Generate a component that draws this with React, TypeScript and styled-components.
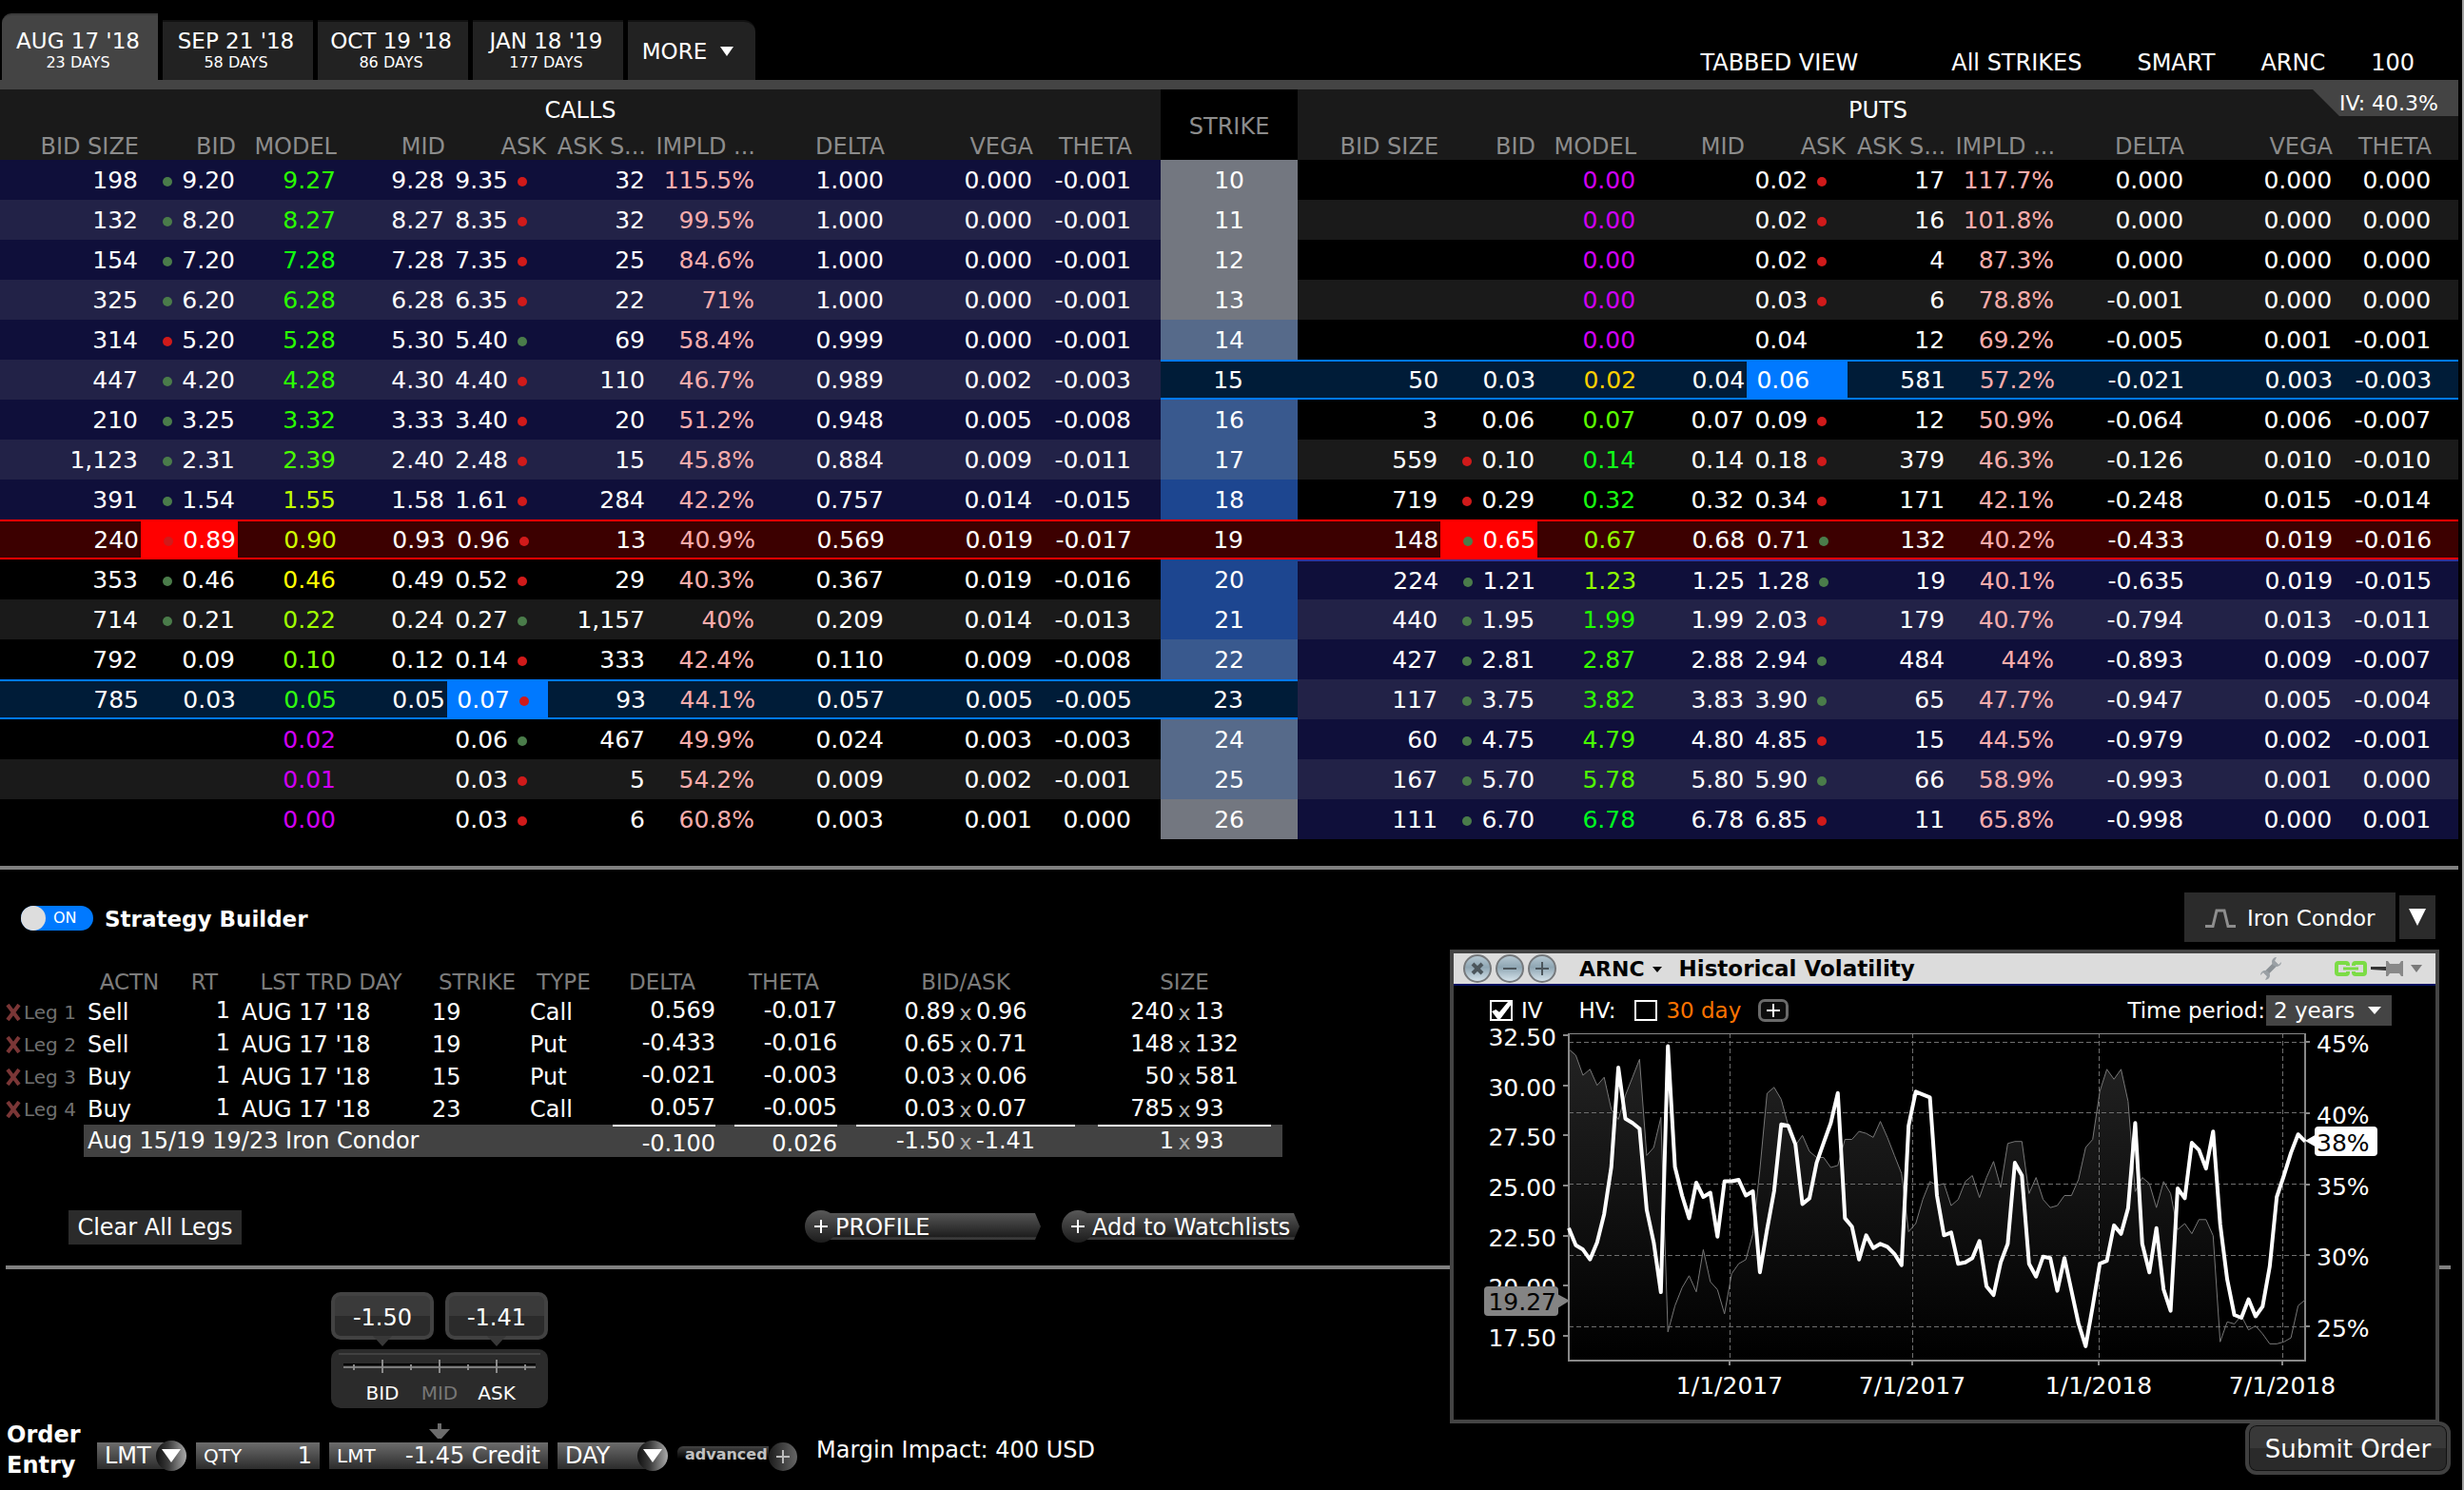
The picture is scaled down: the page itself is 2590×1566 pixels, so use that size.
import React from "react";
import styled, { createGlobalStyle, css } from "styled-components";

const GlobalStyle = createGlobalStyle`
  *, *::before, *::after { box-sizing: border-box; }
  body {
    margin: 0;
    background: #000;
    color: #fff;
    font-family: "DejaVu Sans", Verdana, sans-serif;
    font-size: 24px;
    line-height: 28px;
  }
  button, input, select {
    margin: 0;
    padding: 0;
    border: 0;
    border-radius: 0;
    background: none;
    color: inherit;
    font: inherit;
  }
`;

const Page = styled.main`
  min-height: 100vh;
  padding-right: 4px;
  border-right: 2px solid #a0a0a0;
  display: flex;
  flex-direction: column;
`;

/* ---------- top bar ---------- */

const TopBar = styled.header`
  height: 84px;
  display: flex;
  align-items: flex-end;
  justify-content: space-between;
`;

const Tabs = styled.nav`
  display: flex;
  align-items: flex-end;
  gap: 5px;
  padding-left: 2px;
`;

const Tab = styled.button<{ $active?: boolean }>`
  width: ${(p) => (p.$active ? 164 : 158)}px;
  height: ${(p) => (p.$active ? 70 : 63)}px;
  padding: 0 4px 8px 0;
  display: flex;
  flex-direction: column;
  justify-content: flex-end;
  align-items: center;
  border-radius: ${(p) => (p.$active ? "10px 0 0 0" : "0")};
  border-top: 2px solid ${(p) => (p.$active ? "#3a3a3a" : "#111")};
  background: ${(p) => (p.$active ? "#444" : "#222")};
  font-size: 23px;
  line-height: 26px;
  white-space: nowrap;
`;

const TabDays = styled.span`
  font-size: 16px;
  line-height: 20px;
`;

const MoreTab = styled.button`
  width: 134px;
  height: 63px;
  padding-right: 8px;
  display: flex;
  align-items: center;
  justify-content: center;
  gap: 14px;
  border-radius: 0 12px 0 0;
  border-top: 2px solid #111;
  background: #222;
  font-size: 23px;
`;

const Filters = styled.nav`
  display: flex;
  gap: 48px;
  padding: 0 46px 4px 0;
`;

const Filter = styled.button<{ $gap?: number }>`
  margin-right: ${(p) => p.$gap ?? 0}px;
  white-space: nowrap;
`;

/* ---------- option chain ---------- */

const ChainPanel = styled.section`
  position: relative;
  border-top: 10px solid #444;
`;

const IvBadge = styled.div`
  position: absolute;
  top: 0;
  right: 0;
  width: 153px;
  height: 28px;
  padding-right: 21px;
  background: #444;
  clip-path: polygon(0 0, 100% 0, 100% 100%, 28px 100%);
  font-size: 22px;
  line-height: 30px;
  text-align: right;
`;

const Chain = styled.table`
  width: 100%;
  table-layout: fixed;
  border-collapse: separate;
  border-spacing: 0;
  font-size: 25px;
  line-height: 34px;
`;

const SideHead = styled.th`
  height: 40px;
  padding: 4px 0 0;
  background: #1a1a1a;
  font-size: 24px;
  font-weight: 400;
`;

const ColHead = styled.th`
  height: 34px;
  padding: 5px 2px 0 0;
  background: #1a1a1a;
  color: #8c8c8c;
  font-size: 24px;
  line-height: 28px;
  font-weight: 400;
  text-align: right;
  white-space: nowrap;
`;

const StrikeHead = styled.th`
  padding: 3px 0 0;
  background: #000;
  color: #8c8c8c;
  font-size: 24px;
  font-weight: 400;
`;

type Mark = "buy" | "sell" | "edge" | undefined;

const marks = {
  buy: css`
    background: #001c38;
    border-top: 2px solid #0079ff;
    border-bottom: 2px solid #0079ff;
    padding-right: 2px;
  `,
  sell: css`
    background: #3c0000;
    border-top: 2px solid #f00;
    border-bottom: 2px solid #f00;
    padding-right: 2px;
  `,
  edge: css`
    border-top: 2px solid #333399;
    padding-right: 2px;
  `,
};

const Cell = styled.td<{ $bg: string; $mark: Mark; $fill?: string; $flush?: boolean }>`
  height: 42px;
  padding: 2px 3px 0 0;
  background: ${(p) => p.$bg};
  text-align: right;
  white-space: nowrap;
  ${(p) => p.$mark && marks[p.$mark]}
  ${(p) => p.$fill && `background: ${p.$fill};`}
  ${(p) => p.$flush && "padding-right: 0;"}
`;

const StrikeCell = styled.th<{ $bg: string; $mark: Mark }>`
  height: 42px;
  padding: 2px 0 0;
  background: ${(p) => p.$bg};
  font-weight: 400;
  ${(p) => p.$mark && marks[p.$mark]}
`;

const Tinted = styled.span<{ $color: string }>`
  color: ${(p) => p.$color};
`;

const Quote = styled.div`
  display: flex;
  align-items: center;
  justify-content: flex-end;
`;

const Dot = styled.i<{ $up: boolean }>`
  width: 10px;
  height: 10px;
  margin: 2px 10px 0;
  border-radius: 50%;
  background: ${(p) => (p.$up ? "#4a7c4a" : "#d01a1a")};
`;

const DotSlot = styled.span<{ $tight: boolean }>`
  width: ${(p) => (p.$tight ? 40 : 42)}px;
  display: flex;
`;

/* bidSize, bidDot, bid, model, modelColor, mid, ask, askDot, askSize, implied, delta, vega, theta */
type Side = [string, string, string, string, string, string, string, string, string, string, string, string, string];
interface Row {
  strike: number;
  shade: string;
  call: Side;
  put: Side;
}

const V = "#d000f5";
const rows: Row[] = [
  { strike: 10, shade: "#737780", call: ["198", "g", "9.20", "9.27", "#2aff00", "9.28", "9.35", "r", "32", "115.5%", "1.000", "0.000", "-0.001"], put: ["", "", "", "0.00", V, "", "0.02", "r", "17", "117.7%", "0.000", "0.000", "0.000"] },
  { strike: 11, shade: "#737780", call: ["132", "g", "8.20", "8.27", "#2aff00", "8.27", "8.35", "r", "32", "99.5%", "1.000", "0.000", "-0.001"], put: ["", "", "", "0.00", V, "", "0.02", "r", "16", "101.8%", "0.000", "0.000", "0.000"] },
  { strike: 12, shade: "#737780", call: ["154", "g", "7.20", "7.28", "#10ff10", "7.28", "7.35", "r", "25", "84.6%", "1.000", "0.000", "-0.001"], put: ["", "", "", "0.00", V, "", "0.02", "r", "4", "87.3%", "0.000", "0.000", "0.000"] },
  { strike: 13, shade: "#737780", call: ["325", "g", "6.20", "6.28", "#2aff00", "6.28", "6.35", "r", "22", "71%", "1.000", "0.000", "-0.001"], put: ["", "", "", "0.00", V, "", "0.03", "r", "6", "78.8%", "-0.001", "0.000", "0.000"] },
  { strike: 14, shade: "#566a8a", call: ["314", "r", "5.20", "5.28", "#2aff00", "5.30", "5.40", "g", "69", "58.4%", "0.999", "0.000", "-0.001"], put: ["", "", "", "0.00", V, "", "0.04", "", "12", "69.2%", "-0.005", "0.001", "-0.001"] },
  { strike: 15, shade: "#001c38", call: ["447", "g", "4.20", "4.28", "#2aff00", "4.30", "4.40", "r", "110", "46.7%", "0.989", "0.002", "-0.003"], put: ["50", "", "0.03", "0.02", "#ffd000", "0.04", "0.06", "", "581", "57.2%", "-0.021", "0.003", "-0.003"] },
  { strike: 16, shade: "#39598e", call: ["210", "g", "3.25", "3.32", "#2aff00", "3.33", "3.40", "r", "20", "51.2%", "0.948", "0.005", "-0.008"], put: ["3", "", "0.06", "0.07", "#5aff00", "0.07", "0.09", "r", "12", "50.9%", "-0.064", "0.006", "-0.007"] },
  { strike: 17, shade: "#39598e", call: ["1,123", "g", "2.31", "2.39", "#4aff00", "2.40", "2.48", "r", "15", "45.8%", "0.884", "0.009", "-0.011"], put: ["559", "r", "0.10", "0.14", "#10ff18", "0.14", "0.18", "r", "379", "46.3%", "-0.126", "0.010", "-0.010"] },
  { strike: 18, shade: "#1d4690", call: ["391", "g", "1.54", "1.55", "#c0ff00", "1.58", "1.61", "r", "284", "42.2%", "0.757", "0.014", "-0.015"], put: ["719", "r", "0.29", "0.32", "#18ff10", "0.32", "0.34", "r", "171", "42.1%", "-0.248", "0.015", "-0.014"] },
  { strike: 19, shade: "#3c0000", call: ["240", "r", "0.89", "0.90", "#d0ff00", "0.93", "0.96", "r", "13", "40.9%", "0.569", "0.019", "-0.017"], put: ["148", "g", "0.65", "0.67", "#90ff00", "0.68", "0.71", "g", "132", "40.2%", "-0.433", "0.019", "-0.016"] },
  { strike: 20, shade: "#1d4690", call: ["353", "g", "0.46", "0.46", "#ffff00", "0.49", "0.52", "r", "29", "40.3%", "0.367", "0.019", "-0.016"], put: ["224", "g", "1.21", "1.23", "#90ff00", "1.25", "1.28", "g", "19", "40.1%", "-0.635", "0.019", "-0.015"] },
  { strike: 21, shade: "#1d4690", call: ["714", "g", "0.21", "0.22", "#a0ff00", "0.24", "0.27", "g", "1,157", "40%", "0.209", "0.014", "-0.013"], put: ["440", "g", "1.95", "1.99", "#20ff00", "1.99", "2.03", "r", "179", "40.7%", "-0.794", "0.013", "-0.011"] },
  { strike: 22, shade: "#39598e", call: ["792", "", "0.09", "0.10", "#80ff00", "0.12", "0.14", "r", "333", "42.4%", "0.110", "0.009", "-0.008"], put: ["427", "g", "2.81", "2.87", "#38ff00", "2.88", "2.94", "g", "484", "44%", "-0.893", "0.009", "-0.007"] },
  { strike: 23, shade: "#001c38", call: ["785", "", "0.03", "0.05", "#30ff10", "0.05", "0.07", "r", "93", "44.1%", "0.057", "0.005", "-0.005"], put: ["117", "g", "3.75", "3.82", "#30ff00", "3.83", "3.90", "g", "65", "47.7%", "-0.947", "0.005", "-0.004"] },
  { strike: 24, shade: "#566a8a", call: ["", "", "", "0.02", V, "", "0.06", "g", "467", "49.9%", "0.024", "0.003", "-0.003"], put: ["60", "g", "4.75", "4.79", "#48ff00", "4.80", "4.85", "r", "15", "44.5%", "-0.979", "0.002", "-0.001"] },
  { strike: 25, shade: "#566a8a", call: ["", "", "", "0.01", V, "", "0.03", "r", "5", "54.2%", "0.009", "0.002", "-0.001"], put: ["167", "g", "5.70", "5.78", "#50ff00", "5.80", "5.90", "g", "66", "58.9%", "-0.993", "0.001", "0.000"] },
  { strike: 26, shade: "#737780", call: ["", "", "", "0.00", V, "", "0.03", "r", "6", "60.8%", "0.003", "0.001", "0.000"], put: ["111", "g", "6.70", "6.78", "#00ff20", "6.78", "6.85", "r", "11", "65.8%", "-0.998", "0.000", "0.001"] },
];

const sideColumns = ["BID SIZE", "BID", "MODEL", "MID", "ASK", "ASK S...", "IMPLD ...", "DELTA", "VEGA", "THETA", ""];
const callWidths = [148, 102, 106, 114, 106, 105, 115, 136, 156, 104, 28];
const putWidths = [150, 102, 106, 114, 106, 105, 115, 136, 156, 104, 26];

function SideCells({ data, bg, mark }: { data: Side; bg: string; mark: Mark }) {
  const [bidSize, bidDot, bid, model, modelColor, mid, ask, askDot, askSize, implied, delta, vega, theta] = data;
  const common = { $bg: bg, $mark: mark };
  return (
    <>
      <Cell {...common}>{bidSize}</Cell>
      <Cell {...common} $fill={mark === "sell" ? "#f00" : undefined}>
        <Quote>
          {bidDot && <Dot $up={bidDot === "g"} />}
          {bid}
        </Quote>
      </Cell>
      <Cell {...common}>
        <Tinted $color={modelColor}>{model}</Tinted>
      </Cell>
      <Cell {...common}>{mid}</Cell>
      <Cell {...common} $fill={mark === "buy" ? "#0079ff" : undefined} $flush>
        <Quote>
          {ask}
          <DotSlot $tight={Boolean(mark)}>{askDot && <Dot $up={askDot === "g"} />}</DotSlot>
        </Quote>
      </Cell>
      <Cell {...common}>{askSize}</Cell>
      <Cell {...common}>
        <Tinted $color="#f8acac">{implied}</Tinted>
      </Cell>
      <Cell {...common}>{delta}</Cell>
      <Cell {...common}>{vega}</Cell>
      <Cell {...common}>{theta}</Cell>
      <Cell {...common} />
    </>
  );
}

function OptionChain() {
  return (
    <ChainPanel>
      <Chain>
        <colgroup>
          {callWidths.map((w, i) => <col key={i} width={w} />)}
          <col width={144} />
          {putWidths.map((w, i) => <col key={i} width={w} />)}
        </colgroup>
        <thead>
          <tr>
            <SideHead colSpan={11}>CALLS</SideHead>
            <StrikeHead rowSpan={2}>STRIKE</StrikeHead>
            <SideHead colSpan={11}>PUTS</SideHead>
          </tr>
          <tr>
            {sideColumns.map((c, i) => <ColHead key={`c${i}`}>{c}</ColHead>)}
            {sideColumns.map((c, i) => <ColHead key={`p${i}`}>{c}</ColHead>)}
          </tr>
        </thead>
        <tbody>
          {rows.map(({ strike, shade, call, put }) => {
            const odd = strike % 2 === 1;
            const inMoney = odd ? "#222247" : "#0f0f3a";
            const outMoney = odd ? "#1a1a1a" : "#000";
            const callMark: Mark = strike === 19 ? "sell" : strike === 23 ? "buy" : undefined;
            const putMark: Mark = strike === 19 ? "sell" : strike === 15 ? "buy" : strike === 20 ? "edge" : undefined;
            const strikeMark: Mark = strike === 19 ? "sell" : strike === 15 || strike === 23 ? "buy" : undefined;
            return (
              <tr key={strike}>
                <SideCells data={call} bg={strike < 19 ? inMoney : outMoney} mark={callMark} />
                <StrikeCell scope="row" $bg={shade} $mark={strikeMark}>{strike}</StrikeCell>
                <SideCells data={put} bg={strike > 19 ? inMoney : outMoney} mark={putMark} />
              </tr>
            );
          })}
        </tbody>
      </Chain>
      <IvBadge>IV: 40.3%</IvBadge>
    </ChainPanel>
  );
}

/* ---------- strategy builder ---------- */

const Lower = styled.div`
  position: relative;
  flex: 1;
  display: flex;
  flex-direction: column;
  margin-top: 28px;
  border-top: 4px solid #808080;
`;

const Builder = styled.section`
  height: 416px;
  padding-top: 24px;
`;

const BuilderHead = styled.div`
  height: 52px;
  padding: 0 24px 0 22px;
  display: flex;
  align-items: center;
`;

const Switch = styled.label`
  width: 76px;
  height: 26px;
  margin-top: 2px;
  display: flex;
  align-items: center;
  gap: 8px;
  border-radius: 13px;
  background: #0079ff;
  font-size: 16px;
  line-height: 28px;
`;

const Knob = styled.input`
  appearance: none;
  width: 26px;
  height: 26px;
  border-radius: 50%;
  background: #ddd;
`;

const BuilderTitle = styled.h2`
  margin: 0 auto 0 12px;
  padding-top: 3px;
  font-size: 23px;
  font-weight: 700;
`;

const StrategyButton = styled.button`
  width: 222px;
  height: 52px;
  padding: 2px 0 0 22px;
  display: flex;
  align-items: center;
  gap: 12px;
  background: #2b2b2b;
  font-size: 23px;
  white-space: nowrap;
`;

const ArrowButton = styled.button`
  width: 38px;
  height: 46px;
  margin-left: 4px;
  display: grid;
  place-items: center;
  background: #2b2b2b;
`;

const Legs = styled.table`
  margin-top: 22px;
  table-layout: fixed;
  width: 1348px;
  border-collapse: separate;
  border-spacing: 0;
  line-height: 28px;
`;

const LegHead = styled.th`
  height: 34px;
  padding: 6px 0 0;
  color: #7c7c7c;
  font-size: 23px;
  font-weight: 400;
  white-space: nowrap;
`;

const LegCell = styled.td<{ $pad?: number }>`
  height: 34px;
  padding: 2px 0 0 ${(p) => p.$pad ?? 4}px;
  white-space: nowrap;
`;

const LegNumber = styled.td<{ $pad?: number }>`
  height: 34px;
  padding: 0 ${(p) => p.$pad ?? 8}px 2px 0;
  text-align: right;
`;

const LegName = styled.div`
  display: flex;
  align-items: center;
  padding-left: 5px;
  gap: 2px;
  color: #707070;
  font-size: 20px;
  line-height: 28px;
`;

const RemoveButton = styled.button`
  width: 18px;
  height: 18px;
  display: grid;
  place-items: center;
`;

const Pair = styled.div`
  display: grid;
  grid-template-columns: 1fr 22px 1fr;
  text-align: left;
  & > :first-child { text-align: right; }
`;

const Times = styled.span`
  padding-top: 2px;
  color: #b0b0b0;
  font-size: 22px;
  text-align: center;
`;

const TotalCell = styled.td`
  height: 34px;
  padding: 0;
  background: #424242;
  white-space: nowrap;
`;

const TotalName = styled.div`
  padding-left: 4px;
`;

const TotalLine = styled.div<{ $end: number }>`
  height: 34px;
  margin: 0 ${(p) => p.$end}px 0 12px;
  padding-top: 4px;
  border-top: 2px solid #fff;
  text-align: right;
`;

const PairLine = styled(TotalLine)`
  padding-top: 1px;
`;

const BuilderActions = styled.div`
  width: 1366px;
  margin-top: 56px;
  padding-left: 72px;
  display: flex;
  align-items: flex-start;
`;

const ClearButton = styled.button`
  width: 182px;
  height: 36px;
  margin-right: auto;
  background: #2b2b2b;
  white-space: nowrap;
`;

const PlusButton = styled.button<{ $width: number }>`
  width: ${(p) => p.$width}px;
  height: 34px;
  margin-left: 22px;
  display: flex;
  align-items: center;
  white-space: nowrap;
`;

const PlusDisc = styled.span`
  width: 34px;
  height: 34px;
  margin-right: -14px;
  z-index: 1;
  display: grid;
  place-items: center;
  border-radius: 50%;
  background: linear-gradient(#585858, #1c1c1c);
`;

const PlusBar = styled.span`
  flex: 1;
  height: 28px;
  padding: 1px 0 0 12px;
  background: linear-gradient(#555, #1e1e1e 88%, #3a3a3a 92%);
  clip-path: polygon(0 0, calc(100% - 6px) 0, 100% 50%, calc(100% - 6px) 100%, 0 100%);
  text-align: left;
`;

interface Leg {
  action: string;
  strike: string;
  type: string;
  delta: string;
  theta: string;
  quote: [string, string];
  size: [string, string];
}

const legs: Leg[] = [
  { action: "Sell", strike: "19", type: "Call", delta: "0.569", theta: "-0.017", quote: ["0.89", "0.96"], size: ["240", "13"] },
  { action: "Sell", strike: "19", type: "Put", delta: "-0.433", theta: "-0.016", quote: ["0.65", "0.71"], size: ["148", "132"] },
  { action: "Buy", strike: "15", type: "Put", delta: "-0.021", theta: "-0.003", quote: ["0.03", "0.06"], size: ["50", "581"] },
  { action: "Buy", strike: "23", type: "Call", delta: "0.057", theta: "-0.005", quote: ["0.03", "0.07"], size: ["785", "93"] },
];

const legColumns: [string, number][] = [
  ["", 88], ["ACTN", 96], ["RT", 62], ["LST TRD DAY", 204], ["STRIKE", 103],
  ["TYPE", 79], ["DELTA", 128], ["THETA", 128], ["BID/ASK", 254], ["SIZE", 206],
];

const By = ({ pair }: { pair: [string, string] }) => (
  <Pair>
    <span>{pair[0]}</span>
    <Times>x</Times>
    <span>{pair[1]}</span>
  </Pair>
);

const Caret = ({ w, h, color = "#fff" }: { w: number; h: number; color?: string }) => (
  <svg width={w} height={h} viewBox="0 0 10 10" preserveAspectRatio="none" aria-hidden="true">
    <path d="M0 0H10L5 10Z" fill={color} />
  </svg>
);

const Plus = ({ size, color = "#fff", weight = 2 }: { size: number; color?: string; weight?: number }) => (
  <svg width={size} height={size} viewBox={`0 0 ${size} ${size}`} aria-hidden="true">
    <path d={`M${size / 2} 0V${size}M0 ${size / 2}H${size}`} stroke={color} strokeWidth={weight} />
  </svg>
);

function StrategyBuilder() {
  return (
    <Builder>
      <BuilderHead>
        <Switch>
          <Knob type="checkbox" defaultChecked />
          ON
        </Switch>
        <BuilderTitle>Strategy Builder</BuilderTitle>
        <StrategyButton>
          <svg width="32" height="20" viewBox="0 0 32 20" fill="none" stroke="#8e8e8e" strokeWidth="3" aria-hidden="true">
            <path d="M0 18.500H8L12 2H20L24 18.500H32" />
          </svg>
          Iron Condor
        </StrategyButton>
        <ArrowButton aria-label="Choose strategy">
          <Caret w={18} h={18} />
        </ArrowButton>
      </BuilderHead>

      <Legs>
        <colgroup>
          {legColumns.map(([, w], i) => <col key={i} width={w} />)}
        </colgroup>
        <thead>
          <tr>
            {legColumns.map(([name], i) => <LegHead key={i}>{name}</LegHead>)}
          </tr>
        </thead>
        <tbody>
          {legs.map((leg, i) => (
            <tr key={i}>
              <LegCell $pad={0}>
                <LegName>
                  <RemoveButton aria-label={`Remove leg ${i + 1}`}>
                    <svg width="18" height="18" viewBox="0 0 18 18" aria-hidden="true">
                      <path d="M3 1L15 17M15 1L3 17" stroke="#7a3636" strokeWidth="4" />
                    </svg>
                  </RemoveButton>
                  Leg {i + 1}
                </LegName>
              </LegCell>
              <LegCell>{leg.action}</LegCell>
              <LegNumber $pad={4}>1</LegNumber>
              <LegCell $pad={8}>AUG 17 '18</LegCell>
              <LegCell>{leg.strike}</LegCell>
              <LegCell>{leg.type}</LegCell>
              <LegNumber>{leg.delta}</LegNumber>
              <LegNumber>{leg.theta}</LegNumber>
              <LegCell $pad={0}><By pair={leg.quote} /></LegCell>
              <LegCell $pad={0}><By pair={leg.size} /></LegCell>
            </tr>
          ))}
          <tr>
            <td />
            <TotalCell colSpan={5}>
              <TotalName>Aug 15/19 19/23 Iron Condor</TotalName>
            </TotalCell>
            <TotalCell><TotalLine $end={8}>-0.100</TotalLine></TotalCell>
            <TotalCell><TotalLine $end={8}>0.026</TotalLine></TotalCell>
            <TotalCell><PairLine $end={12}><By pair={["-1.50", "-1.41"]} /></PairLine></TotalCell>
            <TotalCell><PairLine $end={12}><By pair={["1", "93"]} /></PairLine></TotalCell>
          </tr>
        </tbody>
      </Legs>

      <BuilderActions>
        <ClearButton>Clear All Legs</ClearButton>
        <PlusButton $width={248}>
          <PlusDisc><Plus size={14} /></PlusDisc>
          <PlusBar>PROFILE</PlusBar>
        </PlusButton>
        <PlusButton $width={250}>
          <PlusDisc><Plus size={14} /></PlusDisc>
          <PlusBar>Add to Watchlists</PlusBar>
        </PlusButton>
      </BuilderActions>
    </Builder>
  );
}

/* ---------- order entry ---------- */

const Divider = styled.hr`
  width: auto;
  height: 4px;
  margin: 0 8px 0 6px;
  border: 0;
  background: #808080;
`;

const Order = styled.section`
  flex: 1;
  min-height: 232px;
  padding: 0 8px 0 7px;
  display: flex;
  align-items: flex-end;
`;

const OrderTitle = styled.h2`
  width: 95px;
  margin: 0 0 10px;
  font-size: 24px;
  line-height: 32px;
  font-weight: 700;
`;

const Picker = styled.label<{ $width: number }>`
  position: relative;
  width: ${(p) => p.$width}px;
  height: 32px;
  margin: 0 10px 20px 0;
  padding-right: 16px;
  display: flex;
  align-items: center;
`;

const PickerSelect = styled.select`
  appearance: none;
  width: 100%;
  height: 28px;
  padding-left: 8px;
  background: linear-gradient(#6c6c6c, #2c2c2c);
  line-height: 28px;
`;

const PickerDisc = styled.span`
  position: absolute;
  right: 0;
  top: 0;
  width: 32px;
  height: 32px;
  display: grid;
  place-items: center;
  border-radius: 50%;
  background: linear-gradient(90deg, #111, #3a3a3a 40%, #aaa);
  pointer-events: none;
`;

const Field = styled.label<{ $width: number }>`
  width: ${(p) => p.$width}px;
  height: 28px;
  margin: 0 10px 22px 0;
  padding: 0 8px;
  display: flex;
  align-items: center;
  background: linear-gradient(#6c6c6c, #2c2c2c);
  font-size: 20px;
`;

const FieldInput = styled.input`
  flex: 1;
  min-width: 0;
  font-size: 24px;
  text-align: right;
`;

const PriceColumn = styled.div`
  width: 240px;
`;

const Bubbles = styled.div`
  display: flex;
  gap: 12px;
  margin: 0 10px 10px 2px;
`;

const Bubble = styled.button`
  position: relative;
  flex: 1;
  height: 50px;
  padding-top: 4px;
  border: 4px solid #424242;
  border-radius: 10px;
  background: linear-gradient(#3a3a3a 50%, #2b2b2b 50%);

  &::after {
    content: "";
    position: absolute;
    left: 50%;
    top: 100%;
    width: 20px;
    height: 11px;
    margin-left: -10px;
    background: #383838;
    clip-path: polygon(0 0, 100% 0, 50% 100%);
  }
`;

const Scale = styled.div`
  height: 62px;
  margin: 0 10px 0 2px;
  padding: 4px 8px 0;
  border-radius: 10px;
  background: #2b2b2b;
`;

const ScaleTicks = styled.svg`
  display: block;
`;

const ScaleLabels = styled.div`
  display: grid;
  grid-template-columns: repeat(3, 60px);
  justify-content: center;
  margin-top: 6px;
  font-size: 20px;
  line-height: 24px;
  text-align: center;
`;

const ArrowRow = styled.div`
  height: 36px;
  padding: 16px 8px 0 0;
  display: flex;
  justify-content: center;
`;

const Advanced = styled.button`
  width: 126px;
  height: 30px;
  margin: 0 20px 20px 0;
  display: flex;
  align-items: center;
  color: #c0c0c0;
  font-size: 16px;
  font-weight: 700;
`;

const AdvancedBar = styled.span`
  width: 96px;
  height: 22px;
  padding-left: 8px;
  border-radius: 6px 0 0 0;
  background: linear-gradient(#444, #000 60%);
  line-height: 18px;
  text-align: left;
`;

const AdvancedDisc = styled.span`
  width: 30px;
  height: 30px;
  display: grid;
  place-items: center;
  border-radius: 50%;
  background: linear-gradient(90deg, #1c1c1c, #666);
`;

const Margin = styled.p`
  margin: 0 auto 27px 0;
  line-height: 30px;
`;

const Submit = styled.button`
  width: 216px;
  height: 56px;
  margin-bottom: 16px;
  padding-top: 2px;
  border: 4px solid #404040;
  border-radius: 12px;
  background: linear-gradient(#383838 50%, #2a2a2a 50%);
  box-shadow: inset 0 0 0 1px #111;
  font-size: 26px;
  white-space: nowrap;
`;

const Muted = styled.span`
  color: #777;
`;

function OrderEntry() {
  return (
    <Order>
      <OrderTitle>Order Entry</OrderTitle>
      <Picker $width={94}>
        <PickerSelect aria-label="Order type"><option>LMT</option></PickerSelect>
        <PickerDisc><Caret w={20} h={14} /></PickerDisc>
      </Picker>
      <Field $width={130}>
        QTY
        <FieldInput defaultValue="1" />
      </Field>
      <PriceColumn>
        <Bubbles>
          <Bubble>-1.50</Bubble>
          <Bubble>-1.41</Bubble>
        </Bubbles>
        <Scale>
          <ScaleTicks width="212" height="24" viewBox="0 0 212 24" aria-hidden="true">
            <path d="M0 1H212" stroke="#414141" strokeWidth="2" />
            <path d="M5 12H207" stroke="#000" strokeWidth="2" />
            <path d="M5 15H207" stroke="#7c7c7c" strokeWidth="2" />
            <path d="M46 7V21M106 7V21M166 7V21" stroke="#8a8a8a" strokeWidth="2" />
            <path d="M16 12V18M76 12V18M136 12V18M196 12V18" stroke="#8a8a8a" strokeWidth="2" />
          </ScaleTicks>
          <ScaleLabels>
            <span>BID</span>
            <Muted>MID</Muted>
            <span>ASK</span>
          </ScaleLabels>
        </Scale>
        <ArrowRow>
          <svg width="22" height="16" viewBox="0 0 22 16" aria-hidden="true">
            <path d="M11 0V8" stroke="#6c6c6c" strokeWidth="4" />
            <path d="M0 6H22L13 16H9Z" fill="#6c6c6c" />
          </svg>
        </ArrowRow>
        <Field $width={230}>
          LMT
          <FieldInput defaultValue="-1.45 Credit" />
        </Field>
      </PriceColumn>
      <Picker $width={116}>
        <PickerSelect aria-label="Time in force"><option>DAY</option></PickerSelect>
        <PickerDisc><Caret w={20} h={14} /></PickerDisc>
      </Picker>
      <Advanced>
        <AdvancedBar>advanced</AdvancedBar>
        <AdvancedDisc><Plus size={14} color="#bbb" /></AdvancedDisc>
      </Advanced>
      <Margin>Margin Impact: 400 USD</Margin>
      <Submit>Submit Order</Submit>
    </Order>
  );
}

/* ---------- floating volatility window ---------- */

const Window = styled.section`
  position: absolute;
  top: 84px;
  right: 20px;
  width: 1040px;
  border: 4px solid #444;
  background: #000;
`;

const TitleBar = styled.div`
  height: 34px;
  padding: 0 14px 0 10px;
  display: flex;
  align-items: center;
  border-bottom: 2px solid #001060;
  background: #dcdcdc;
  color: #000;
  font-size: 22px;
  font-weight: 700;
`;

const RoundButton = styled.button`
  width: 30px;
  height: 30px;
  margin-right: 4px;
  display: grid;
  place-items: center;
  border: 2px solid #76797c;
  border-radius: 50%;
  background: linear-gradient(#b4c6d0, #8fa6b3 45%, #d4e2ea);
`;

const SymbolButton = styled.button`
  margin: 2px 18px 0 20px;
  display: flex;
  align-items: center;
  gap: 8px;
`;

const WindowTitle = styled.h3`
  margin: 0 auto 0 0;
  font-size: 23px;
  font-weight: 700;
`;

const IconButton = styled.button<{ $before?: number }>`
  display: flex;
  margin-left: ${(p) => p.$before ?? 4}px;
`;

const ChartOptions = styled.div`
  height: 42px;
  padding: 10px 46px 0 38px;
  display: flex;
  align-items: center;
  font-size: 23px;
  line-height: 30px;
`;

const Check = styled.label<{ $orange?: boolean }>`
  display: flex;
  align-items: center;
  gap: 9px;
  color: ${(p) => (p.$orange ? "#ff7300" : "#fff")};
`;

const Box = styled.input`
  appearance: none;
  width: 24px;
  height: 22px;
  border: 2px solid #fff;
  display: grid;
  place-items: center;

  &:checked::before {
    content: "";
    width: 20px;
    height: 18px;
    background: #fff;
    clip-path: polygon(0 55%, 22% 45%, 40% 60%, 85% 0, 100% 0, 100% 20%, 45% 100%, 30% 100%);
  }
`;

const HvLabel = styled.span`
  margin: 0 20px 0 38px;
`;

const AddButton = styled.button`
  width: 32px;
  height: 24px;
  margin: 0 auto 0 18px;
  display: grid;
  place-items: center;
  border: 3px solid #6a6a6a;
  border-radius: 7px;
  background: #0c0c0c;
`;

const Period = styled.label`
  position: relative;
  height: 32px;
  display: flex;
  align-items: center;
  gap: 1px;
`;

const PeriodSelect = styled.select`
  appearance: none;
  width: 132px;
  height: 32px;
  padding-left: 8px;
  background: #444;
`;

const PeriodCaret = styled.span`
  position: absolute;
  right: 11px;
  top: 12px;
  display: flex;
  pointer-events: none;
`;

const Plot = styled.svg`
  display: block;
  width: 100%;
  height: 414px;
  overflow: visible;
  font-size: 25px;
`;

const impliedVol = [
  31.9, 30.7, 30.4, 29.7, 30.9, 32.9, 36.2, 43.2, 39.6, 39.3, 38.9, 33.2, 30.9, 27.4, 44.7, 36.2, 34.2, 32.6, 35.1, 34.1,
  34.4, 31.3, 35.2, 35.2, 35.3, 34.2, 34.5, 28.8, 31.8, 34.5, 39.2, 39.1, 37.8, 33.6, 34.0, 36.5, 37.9, 39.3, 41.4, 32.6,
  32.0, 29.7, 31.4, 30.5, 30.8, 30.6, 30.1, 29.3, 39.1, 41.5, 41.3, 41.1, 34.2, 31.4, 31.6, 29.4, 29.5, 29.8, 31.0, 27.8,
  27.2, 29.5, 30.8, 36.5, 35.6, 29.4, 28.5, 29.9, 29.8, 27.5, 29.8, 27.5, 25.2, 23.6, 26.4, 29.4, 29.6, 32.1, 31.5, 33.3,
  39.3, 30.8, 28.8, 31.9, 27.6, 26.1, 34.7, 34.0, 37.9, 37.4, 36.1, 38.7, 32.2, 28.3, 25.8, 25.6, 26.9, 25.7, 26.4, 29.2,
  34.1, 35.6, 37.2, 38.5, 38.0,
];

const prices = [
  31.8, 31.5, 30.5, 30.8, 30.0, 30.4, 28.8, 28.3, 29.5, 30.4, 31.3, 26.5, 26.9, 28.4, 17.7, 19.0, 19.9, 20.5, 19.7, 21.8,
  20.2, 19.8, 18.6, 20.6, 21.1, 21.3, 22.6, 25.8, 29.6, 29.9, 29.3, 28.0, 27.0, 27.5, 26.7, 26.4, 26.4, 25.9, 26.0, 27.3,
  27.3, 27.7, 27.6, 27.4, 28.2, 27.4, 26.5, 25.6, 22.7, 23.1, 24.3, 25.2, 25.0, 25.1, 24.0, 24.3, 25.2, 25.5, 24.4, 25.4,
  26.2, 24.9, 27.1, 27.2, 27.2, 24.6, 25.4, 24.3, 23.9, 24.0, 24.5, 24.5, 25.3, 26.9, 27.3, 29.7, 30.8, 30.3, 30.8, 29.2,
  24.7, 25.4, 25.1, 23.9, 25.2, 24.6, 22.8, 23.1, 22.6, 23.3, 23.3, 22.5, 17.2, 18.2, 18.1, 18.5, 17.8, 18.0, 17.6, 17.1,
  17.1, 17.2, 17.4, 19.0, 19.3,
];

const LEFT = 121;
const RIGHT = 895;
const TOP = 8;
const BOTTOM = 352;
const xAt = (i: number) => LEFT + (i * (RIGHT - LEFT)) / 104;
const volY = (v: number) => 17 + ((45 - v) * 299) / 20;
const priceY = (v: number) => 10 + ((32.5 - v) * 316) / 15;
const trace = (values: number[], y: (v: number) => number) =>
  values.map((v, i) => `${xAt(i).toFixed(1)},${y(v).toFixed(1)}`).join(" ");

const dates: [string, number][] = [["1/1/2017", 290], ["7/1/2017", 482], ["1/1/2018", 678], ["7/1/2018", 871]];

function VolatilityChart() {
  return (
    <Plot viewBox="0 0 1032 414" role="img" aria-label="Historical volatility of ARNC">
      <defs>
        <linearGradient id="area" x1="0" y1={TOP} x2="0" y2={BOTTOM} gradientUnits="userSpaceOnUse">
          <stop offset="0" stopColor="#242424" />
          <stop offset="1" stopColor="#000" />
        </linearGradient>
      </defs>
      <polygon points={`${LEFT},${BOTTOM} ${trace(prices, priceY)} ${RIGHT},${BOTTOM}`} fill="url(#area)" />
      <g stroke="#6e6e6e" strokeWidth="1" strokeDasharray="5 3" shapeRendering="crispEdges">
        {[45, 40, 35, 30, 25].map((v) => <line key={v} x1={LEFT} x2={RIGHT} y1={volY(v)} y2={volY(v)} />)}
        {dates.map(([d, x]) => <line key={d} x1={x} x2={x} y1={TOP} y2={BOTTOM} />)}
      </g>
      <g stroke="#888" strokeWidth="2" shapeRendering="crispEdges">
        <path d={`M${LEFT} ${TOP}V${BOTTOM}H${RIGHT}V${TOP}`} fill="none" />
        <line x1={LEFT} x2={RIGHT} y1={TOP} y2={TOP} strokeWidth="1" />
        {[32.5, 30, 27.5, 25, 22.5, 20, 17.5].map((v) => <line key={v} x1={LEFT - 6} x2={LEFT} y1={priceY(v)} y2={priceY(v)} />)}
        {[45, 40, 35, 30, 25].map((v) => <line key={v} x1={RIGHT} x2={RIGHT + 5} y1={volY(v)} y2={volY(v)} />)}
        {dates.map(([d, x]) => <line key={d} x1={x} x2={x} y1={BOTTOM} y2={BOTTOM + 5} />)}
      </g>
      <polyline points={trace(prices, priceY)} fill="none" stroke="#777" strokeWidth="1" />
      <polyline points={trace(impliedVol, volY)} fill="none" stroke="#fff" strokeWidth="4" strokeLinejoin="round" />
      <g fill="#fff">
        {[32.5, 30, 27.5, 25, 22.5, 20, 17.5].map((v) => (
          <text key={v} x={108} y={priceY(v) + 11} textAnchor="end">{v.toFixed(2)}</text>
        ))}
        {[45, 40, 35, 30, 25].map((v) => (
          <text key={v} x={907} y={volY(v) + 11}>{v}%</text>
        ))}
        {dates.map(([d, x]) => (
          <text key={d} x={x} y={387} textAnchor="middle">{d}</text>
        ))}
      </g>
      <rect x="32" y="274" width="78" height="31" rx="4" fill="#848484" />
      <path d="M109 282L122 289L109 297Z" fill="#848484" />
      <text x="108" y="299" textAnchor="end" fill="#000">19.27</text>
      <rect x="905" y="106" width="66" height="31" rx="4" fill="#fff" />
      <path d="M907 114L895 121L907 128Z" fill="#fff" />
      <text x="907" y="132" fill="#000">38%</text>
    </Plot>
  );
}

function VolatilityWindow() {
  return (
    <Window>
      <TitleBar>
        <RoundButton aria-label="Close">
          <svg width="14" height="14" viewBox="0 0 14 14" aria-hidden="true"><path d="M2 2L12 12M12 2L2 12" stroke="#4c565c" strokeWidth="4" /></svg>
        </RoundButton>
        <RoundButton aria-label="Minimise">
          <svg width="14" height="14" viewBox="0 0 14 14" aria-hidden="true"><path d="M0 7H14" stroke="#4c565c" strokeWidth="2" /></svg>
        </RoundButton>
        <RoundButton aria-label="Maximise"><Plus size={14} color="#4c565c" /></RoundButton>
        <SymbolButton>ARNC <Caret w={10} h={6} color="#000" /></SymbolButton>
        <WindowTitle>Historical Volatility</WindowTitle>
        <IconButton aria-label="Settings">
          <svg width="26" height="26" viewBox="0 0 26 26" fill="none" aria-hidden="true">
            <path d="M7 19L19 7" stroke="#8b9196" strokeWidth="5" />
            <path d="M24 6A5 5 0 1 1 19 1L17 5L21 9ZM2 20A5 5 0 1 1 7 25L9 21L5 17Z" fill="#9aa0a5" />
          </svg>
        </IconButton>
        <IconButton $before={54} aria-label="Link group">
          <svg width="34" height="16" viewBox="0 0 34 16" fill="none" stroke="#7cdc46" strokeWidth="4" aria-hidden="true">
            <path d="M14 5V4A2 2 0 0 0 12 2H4A2 2 0 0 0 2 4V12A2 2 0 0 0 4 14H12A2 2 0 0 0 14 12V11" />
            <path d="M20 5V4A2 2 0 0 1 22 2H30A2 2 0 0 1 32 4V12A2 2 0 0 1 30 14H22A2 2 0 0 1 20 12V11" />
            <path d="M9 8H25" strokeWidth="3" />
          </svg>
        </IconButton>
        <IconButton aria-label="Pin window">
          <svg width="34" height="16" viewBox="0 0 34 16" aria-hidden="true">
            <path d="M0 6L16 6V10L0 9Z" fill="#333" />
            <path d="M16 0H18L20 3H30L32 0H34V16H32L30 13H20L18 16H16Z" fill="#888" />
          </svg>
        </IconButton>
        <IconButton $before={8} aria-label="Window menu">
          <Caret w={12} h={8} color="#7a7a7a" />
        </IconButton>
      </TitleBar>
      <ChartOptions>
        <Check><Box type="checkbox" defaultChecked /> IV</Check>
        <HvLabel>HV:</HvLabel>
        <Check $orange><Box type="checkbox" /> 30 day</Check>
        <AddButton aria-label="Add period"><Plus size={14} /></AddButton>
        <Period>
          Time period:
          <PeriodSelect><option>2 years</option></PeriodSelect>
          <PeriodCaret><Caret w={14} h={8} /></PeriodCaret>
        </Period>
      </ChartOptions>
      <VolatilityChart />
    </Window>
  );
}

export default function App() {
  return (
    <Page>
      <GlobalStyle />
      <TopBar>
        <Tabs>
          <Tab $active>AUG 17 '18<TabDays>23 DAYS</TabDays></Tab>
          <Tab>SEP 21 '18<TabDays>58 DAYS</TabDays></Tab>
          <Tab>OCT 19 '18<TabDays>86 DAYS</TabDays></Tab>
          <Tab>JAN 18 '19<TabDays>177 DAYS</TabDays></Tab>
          <MoreTab>MORE <Caret w={14} h={10} /></MoreTab>
        </Tabs>
        <Filters>
          <Filter $gap={50}>TABBED VIEW</Filter>
          <Filter $gap={10}>All STRIKES</Filter>
          <Filter>SMART</Filter>
          <Filter>ARNC</Filter>
          <Filter>100</Filter>
        </Filters>
      </TopBar>
      <OptionChain />
      <Lower>
        <StrategyBuilder />
        <Divider />
        <OrderEntry />
        <VolatilityWindow />
      </Lower>
    </Page>
  );
}
